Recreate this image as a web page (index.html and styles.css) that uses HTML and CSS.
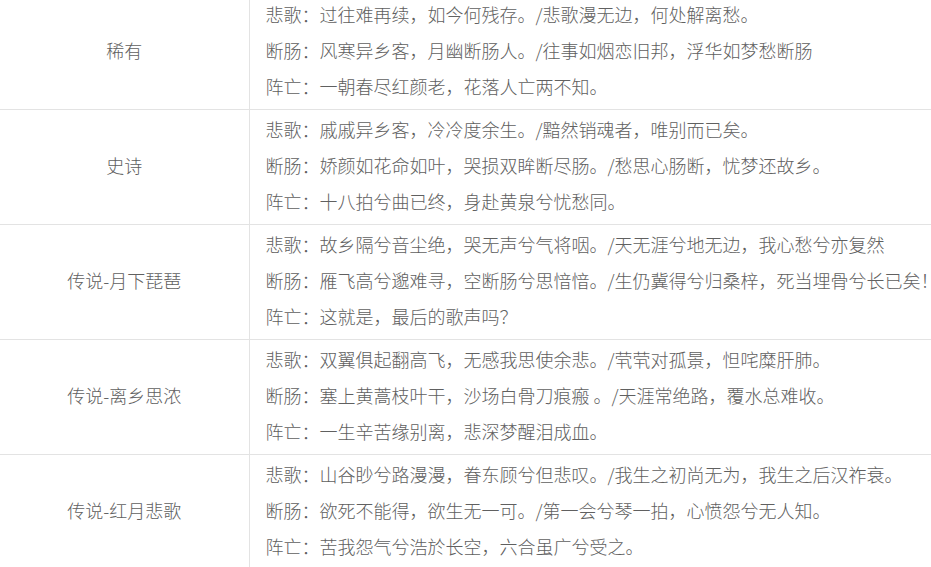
FILE: index.html
```html
<!DOCTYPE html>
<html lang="zh-CN">
<head>
<meta charset="utf-8">
<title>诗词表</title>
<link rel="stylesheet" href="styles.css">
</head>
<body>
<table class="poems">
  <colgroup><col class="c-name"><col class="c-text"></colgroup>
  <tbody>
    <tr>
      <td class="name">稀有</td>
      <td class="lines">
        <div class="line">悲歌：过往难再续，如今何残存。/悲歌漫无边，何处解离愁。</div>
        <div class="line">断肠：风寒异乡客，月幽断肠人。/往事如烟恋旧邦，浮华如梦愁断肠</div>
        <div class="line">阵亡：一朝春尽红颜老，花落人亡两不知。</div>
      </td>
    </tr>
    <tr>
      <td class="name">史诗</td>
      <td class="lines">
        <div class="line">悲歌：戚戚异乡客，冷冷度余生。/黯然销魂者，唯别而已矣。</div>
        <div class="line">断肠：娇颜如花命如叶，哭损双眸断尽肠。/愁思心肠断，忧梦还故乡。</div>
        <div class="line">阵亡：十八拍兮曲已终，身赴黄泉兮忧愁同。</div>
      </td>
    </tr>
    <tr>
      <td class="name">传说-月下琵琶</td>
      <td class="lines">
        <div class="line">悲歌：故乡隔兮音尘绝，哭无声兮气将咽。/天无涯兮地无边，我心愁兮亦复然</div>
        <div class="line">断肠：雁飞高兮邈难寻，空断肠兮思愔愔。/生仍冀得兮归桑梓，死当埋骨兮长已矣！</div>
        <div class="line">阵亡：这就是，最后的歌声吗？</div>
      </td>
    </tr>
    <tr>
      <td class="name">传说-离乡思浓</td>
      <td class="lines">
        <div class="line">悲歌：双翼俱起翻高飞，无感我思使余悲。/茕茕对孤景，怛咤糜肝肺。</div>
        <div class="line">断肠：塞上黄蒿枝叶干，沙场白骨刀痕瘢 。/天涯常绝路，覆水总难收。</div>
        <div class="line">阵亡：一生辛苦缘别离，悲深梦醒泪成血。</div>
      </td>
    </tr>
    <tr>
      <td class="name">传说-红月悲歌</td>
      <td class="lines">
        <div class="line">悲歌：山谷眇兮路漫漫，眷东顾兮但悲叹。/我生之初尚无为，我生之后汉祚衰。</div>
        <div class="line">断肠：欲死不能得，欲生无一可。/第一会兮琴一拍，心愤怨兮无人知。</div>
        <div class="line">阵亡：苦我怨气兮浩於长空，六合虽广兮受之。</div>
      </td>
    </tr>
  </tbody>
</table>
</body>
</html>
```

FILE: styles.css
```css
html, body {
  margin: 0;
  padding: 0;
  background: #ffffff;
}
body {
  overflow: hidden;
  font-family: "Noto Sans CJK SC", "Noto Sans", sans-serif;
  font-size: 18px;
  color: #606060;
}
.poems {
  width: 100%;
  margin-top: -5px;
  border-collapse: collapse;
  table-layout: fixed;
}
.c-name { width: 249px; }
.poems td {
  border-bottom: 1px solid #e3e3e3;
  padding: 1px 0 5px;
  vertical-align: middle;
  font-weight: 300;
}
.name {
  text-align: center;
  border-right: 1px solid #e3e3e3;
}
.lines {
  padding-left: 16px !important;
  white-space: nowrap;
}
.line {
  height: 36px;
  line-height: 36px;
}
```
